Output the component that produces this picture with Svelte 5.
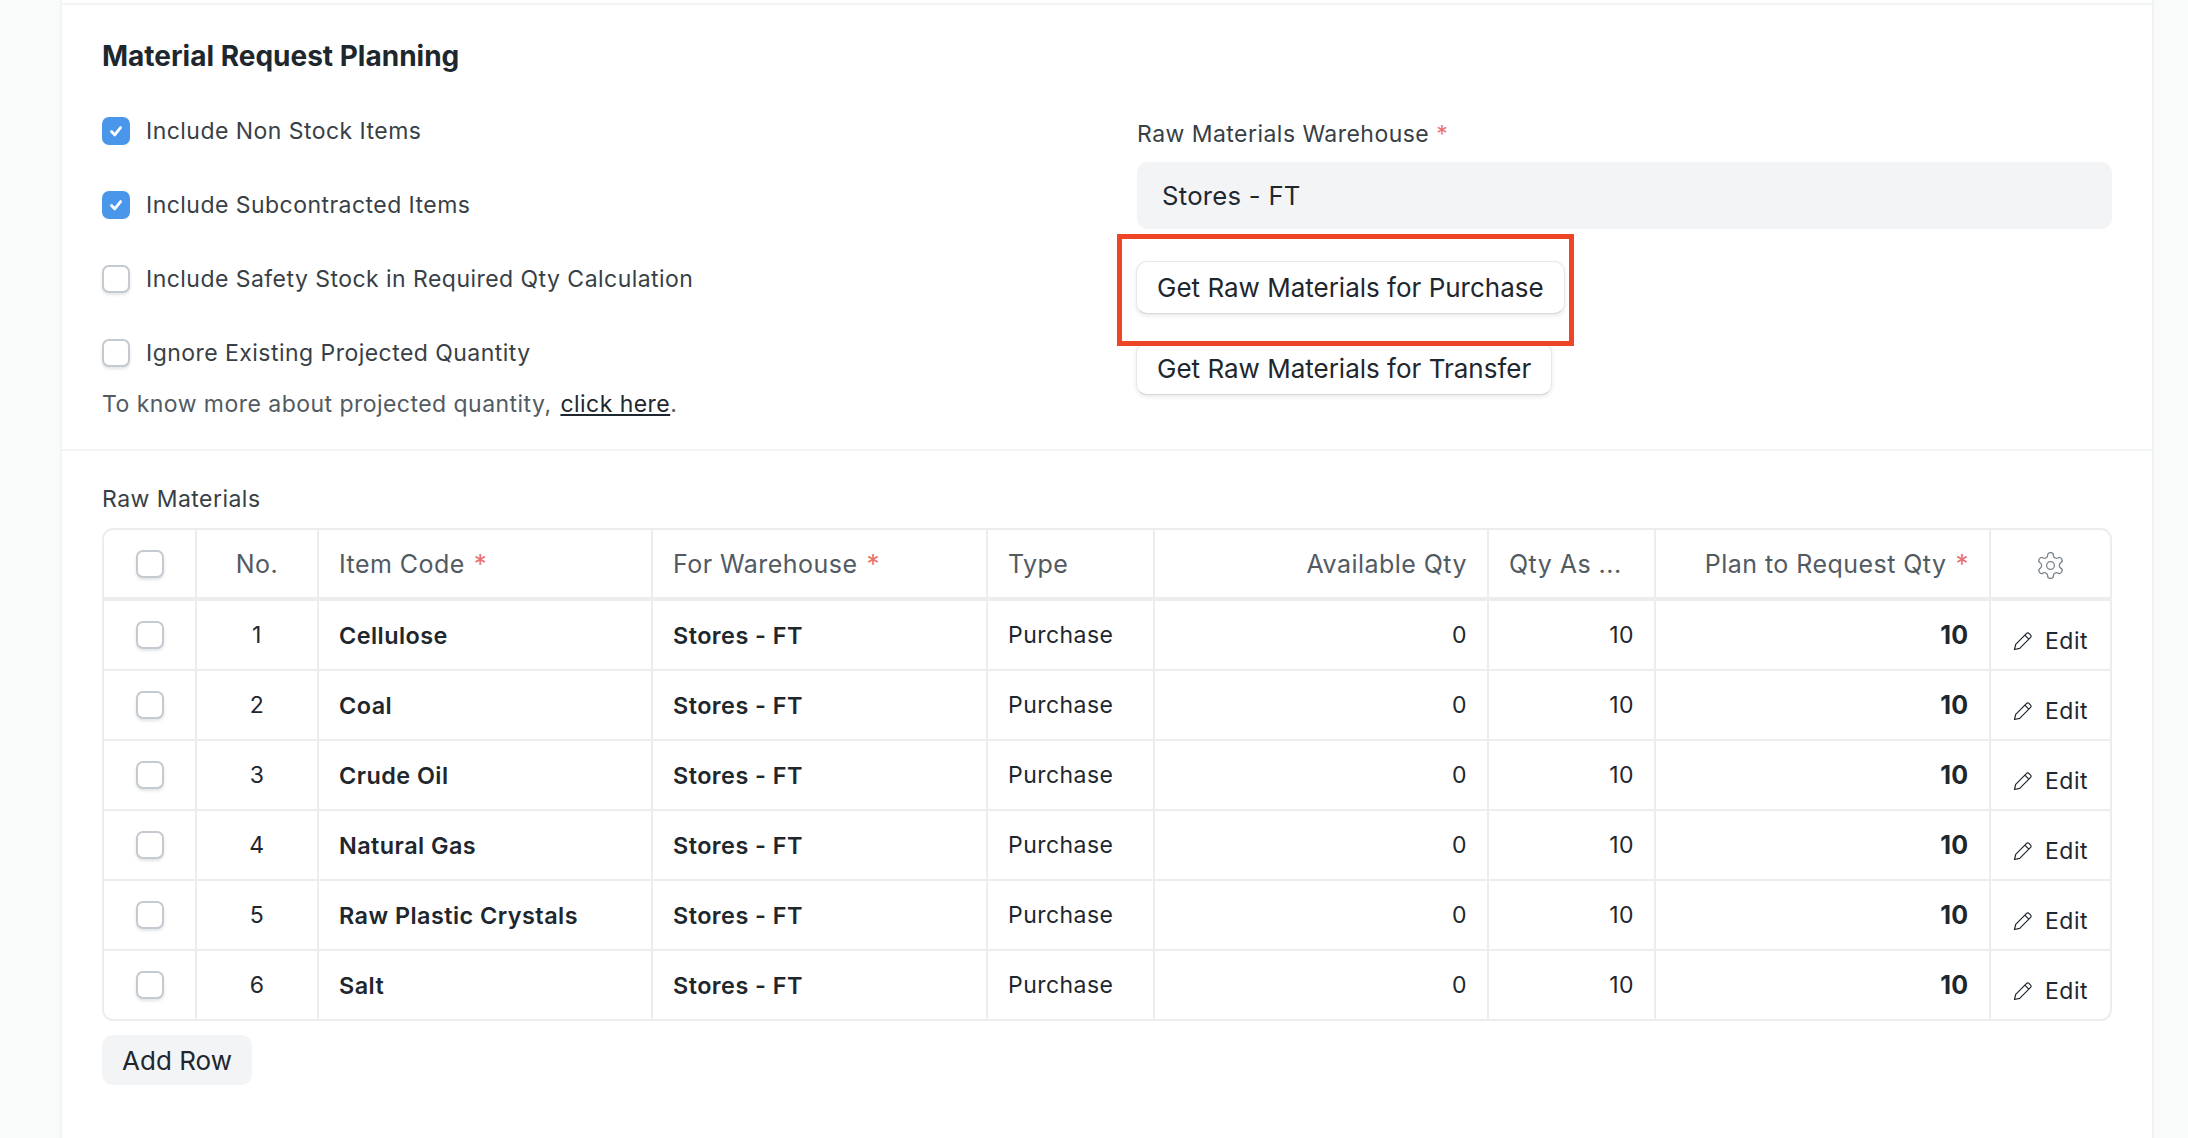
<script>
  const rows = ['Cellulose', 'Coal', 'Crude Oil', 'Natural Gas', 'Raw Plastic Crystals', 'Salt'];
  const checks = [
    { label: 'Include Non Stock Items', on: true },
    { label: 'Include Subcontracted Items', on: true },
    { label: 'Include Safety Stock in Required Qty Calculation', on: false },
    { label: 'Ignore Existing Projected Quantity', on: false }
  ];
</script>

<div class="page">
  <div class="card">
    <section class="planning">
      <h2>Material Request Planning</h2>
      <div class="cols">
        <div class="left">
          {#each checks as c}
            <div class="check">
              <span class="box" class:on={c.on}>
                {#if c.on}
                  <svg viewBox="0 0 28 28" width="28" height="28"><path d="M9.5 14.5l3.2 3.4L18.6 10.6" fill="none" stroke="#fff" stroke-width="2.8" stroke-linecap="round" stroke-linejoin="round"/></svg>
                {/if}
              </span>
              <span>{c.label}</span>
            </div>
          {/each}
          <p class="help">To know more about projected quantity, <a href="#top">click here</a>.</p>
        </div>
        <div class="right">
          <div class="label">Raw Materials Warehouse <i>*</i></div>
          <div class="input">Stores - FT</div>
          <div class="btnwrap">
            <button>Get Raw Materials for Purchase</button>
            <span class="mark"></span>
          </div>
          <button>Get Raw Materials for Transfer</button>
        </div>
      </div>
    </section>

    <section class="materials">
      <div class="label">Raw Materials</div>
      <div class="grid">
        <div class="row head">
          <div class="cell mid"><span class="box"></span></div>
          <div class="cell mid">No.</div>
          <div class="cell">Item Code <i>*</i></div>
          <div class="cell">For Warehouse <i>*</i></div>
          <div class="cell">Type</div>
          <div class="cell end">Available Qty</div>
          <div class="cell">Qty As ...</div>
          <div class="cell end">Plan to Request Qty <i>*</i></div>
          <div class="cell mid">
            <svg class="gear" viewBox="0 0 24 24" width="31" height="31" fill="none" stroke="#7c858d" stroke-width="1" stroke-linejoin="round">
              <path d="M12.22 2h-.44a2 2 0 0 0-2 2v.18a2 2 0 0 1-1 1.73l-.43.25a2 2 0 0 1-2 0l-.15-.08a2 2 0 0 0-2.73.73l-.22.38a2 2 0 0 0 .73 2.73l.15.1a2 2 0 0 1 1 1.72v.51a2 2 0 0 1-1 1.74l-.15.09a2 2 0 0 0-.73 2.73l.22.38a2 2 0 0 0 2.73.73l.15-.08a2 2 0 0 1 2 0l.43.25a2 2 0 0 1 1 1.73V20a2 2 0 0 0 2 2h.44a2 2 0 0 0 2-2v-.18a2 2 0 0 1 1-1.73l.43-.25a2 2 0 0 1 2 0l.15.08a2 2 0 0 0 2.73-.73l.22-.39a2 2 0 0 0-.73-2.73l-.15-.08a2 2 0 0 1-1-1.74v-.5a2 2 0 0 1 1-1.74l.15-.09a2 2 0 0 0 .73-2.73l-.22-.38a2 2 0 0 0-2.73-.73l-.15.08a2 2 0 0 1-2 0l-.43-.25a2 2 0 0 1-1-1.73V4a2 2 0 0 0-2-2z"/>
              <circle cx="12" cy="12" r="3"/>
            </svg>
          </div>
        </div>
        {#each rows as name, i}
          <div class="row">
            <div class="cell mid"><span class="box"></span></div>
            <div class="cell mid">{i + 1}</div>
            <div class="cell strong">{name}</div>
            <div class="cell strong">Stores - FT</div>
            <div class="cell">Purchase</div>
            <div class="cell end">0</div>
            <div class="cell end">10</div>
            <div class="cell end qty">10</div>
            <div class="cell mid edit">
              <svg viewBox="0 0 20 20" width="20" height="20" fill="none" stroke="#1f272e" stroke-width="1.2" stroke-linejoin="round"><path d="M1.5 18.5l1.2-5.2L13.6 2.4a1.6 1.6 0 0 1 2.3 0l1.7 1.7a1.6 1.6 0 0 1 0 2.3L6.7 17.3z"/><path d="M11.8 4.2l4 4"/></svg>
              <span>Edit</span>
            </div>
          </div>
        {/each}
      </div>
      <button class="add">Add Row</button>
    </section>
  </div>
</div>

<style>
  :global(body) { background: #f9fafa; }
  .page {
    height: 1138px;
    overflow: hidden;
    padding-left: 62px;
    padding-right: 36px;
    font-family: Inter, "Liberation Sans", sans-serif;
    font-size: 23px;
    letter-spacing: 0.02em;
    color: #1f272e;
  }
  .card {
    height: 1138px;
    background: #fff;
    box-shadow: 0 0 3px rgba(25, 39, 52, 0.12);
    padding-top: 3px;
  }
  .planning {
    border-top: 2px solid #f3f4f4;
    border-bottom: 2px solid #f3f4f4;
    height: 444px;
    padding: 0 40px;
  }
  h2 {
    margin: 0;
    padding-top: 34px;
    height: 37px;
    font-size: 28px;
    line-height: 34px;
    font-weight: 700;
    letter-spacing: 0;
  }
  .cols { display: flex; }
  .left { width: 1035px; padding-top: 18px; }
  .check {
    display: flex;
    align-items: center;
    gap: 16px;
    height: 74px;
    color: #383f46;
  }
  .box {
    box-sizing: border-box;
    display: block;
    width: 28px;
    height: 28px;
    border: 2px solid #c4cad0;
    border-radius: 7px;
    background: #fff;
    box-shadow: 0 2px 3px rgba(25, 39, 52, 0.12);
  }
  .box.on { background: #4a96ea; border-color: #4a96ea; box-shadow: none; }
  .box svg { display: block; margin: -2px; }
  .help { margin: -1px 0 0; color: #525a62; line-height: 30px; }
  .help a { color: #1f272e; text-decoration: underline; margin-left: 2px; }
  .right { flex: 1; padding-top: 43px; }
  .label { color: #383f46; line-height: 30px; }
  i { color: #e8726d; font-style: normal; }
  .input {
    box-sizing: border-box;
    height: 67px;
    margin-top: 13px;
    padding-left: 25px;
    display: flex;
    align-items: center;
    background: #f3f4f6;
    border-radius: 11px;
    font-size: 25.7px;
    letter-spacing: 0.01em;
  }
  .btnwrap { position: relative; width: fit-content; margin-top: 30px; margin-bottom: 30px; }
  button {
    display: block;
    box-sizing: border-box;
    height: 53px;
    padding: 0 20px;
    margin-left: -1px;
    background: #fff;
    border: 1px solid #e8e9ea;
    border-bottom-color: #d8d9da;
    border-radius: 11px;
    box-shadow: 0 2px 4px rgba(25, 39, 52, 0.1);
    font: inherit;
    font-size: 26px;
    color: #1f272e;
    white-space: nowrap;
  }
  .btnwrap button { position: relative; top: 2px; }
  .mark {
    position: absolute;
    left: -20px;
    top: -25px;
    width: 457px;
    height: 112px;
    box-sizing: border-box;
    border: 5px solid #ef4527;
  }
  .materials { padding: 0 40px; }
  .materials > .label { padding-top: 33px; height: 44px; }
  .grid {
    width: 2010px;
    border: 2px solid #ededee;
    border-radius: 11px;
    box-sizing: border-box;
    overflow: hidden;
  }
  .row {
    display: grid;
    grid-template-columns: 91px 122px 334px 335px 167px 334px 167px 335px 1fr;
    height: 70px;
    border-top: 2px solid #ededee;
    box-sizing: border-box;
  }
  .row.head { height: 69px; border-top: 0; border-bottom: 2px solid #ededee; color: #525a62; font-size: 25px; }
  .cell {
    display: flex;
    align-items: center;
    padding: 0 20px;
    border-left: 2px solid #ededee;
    white-space: nowrap;
    overflow: hidden;
    box-sizing: border-box;
    gap: 9px;
  }
  .cell:first-child { border-left: 0; }
  .cell i { font-size: 26px; }
  .mid { justify-content: center; padding: 0; }
  .end { justify-content: flex-end; }
  .strong { font-weight: 600; font-size: 23.4px; }
  .qty { font-weight: 700; font-size: 25px; letter-spacing: 0; padding-right: 21px; }
  .cell .gear { margin-top: 4px; }
  .edit { gap: 12px; padding-top: 11px; }
  .add {
    margin: 14px 0 0;
    width: 150px;
    height: 50px;
    padding: 0;
    background: #f3f4f6;
    border: 0;
    box-shadow: none;
    border-radius: 11px;
  }
</style>
